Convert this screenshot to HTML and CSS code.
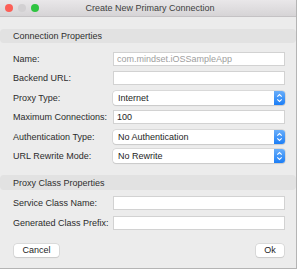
FILE: index.html
```html
<!DOCTYPE html>
<html lang="en">
<head>
  <meta charset="UTF-8" />
  <title>Create New Primary Connection</title>
  <link rel="stylesheet" href="styles.css">
</head>
<body>
  <div class="window">
    <div class="titlebar">
      <div class="lights">
        <span class="light red"></span>
        <span class="light gray"></span>
        <span class="light green"></span>
      </div>
      <div class="title">Create New Primary Connection</div>
    </div>

    <div class="section-head">Connection Properties</div>
    <div class="fields first">
      <label>Name:</label>
      <input type="text" class="field" placeholder="com.mindset.iOSSampleApp">
      <label>Backend URL:</label>
      <input type="text" class="field">
      <label>Proxy Type:</label>
      <div class="select"><span>Internet</span><span class="stepper"><svg width="11" height="14" viewBox="0 0 11 14"><path d="M3.3 5.6 L5.5 3.6 L7.7 5.6 M3.3 8.4 L5.5 10.4 L7.7 8.4" fill="none" stroke="#fff" stroke-width="1.1"/></svg></span></div>
      <label>Maximum Connections:</label>
      <input type="text" class="field" value="100">
      <label>Authentication Type:</label>
      <div class="select"><span>No Authentication</span><span class="stepper"><svg width="11" height="14" viewBox="0 0 11 14"><path d="M3.3 5.6 L5.5 3.6 L7.7 5.6 M3.3 8.4 L5.5 10.4 L7.7 8.4" fill="none" stroke="#fff" stroke-width="1.1"/></svg></span></div>
      <label>URL Rewrite Mode:</label>
      <div class="select"><span>No Rewrite</span><span class="stepper"><svg width="11" height="14" viewBox="0 0 11 14"><path d="M3.3 5.6 L5.5 3.6 L7.7 5.6 M3.3 8.4 L5.5 10.4 L7.7 8.4" fill="none" stroke="#fff" stroke-width="1.1"/></svg></span></div>
    </div>

    <div class="section-head second">Proxy Class Properties</div>
    <div class="fields second-fields">
      <label>Service Class Name:</label>
      <input type="text" class="field">
      <label>Generated Class Prefix:</label>
      <input type="text" class="field">
    </div>

    <div class="buttons">
      <button class="btn cancel">Cancel</button>
      <button class="btn ok">Ok</button>
    </div>
  </div>
</body>
</html>
```

FILE: styles.css
```css
body {
  margin: 0;
  padding: 0;
  background: #ffffff;
  font-family: 'Liberation Sans', Arial, sans-serif;
  font-size: 9px;
  color: #2b2b2b;
}

.window {
  width: 296px;
  height: 268px;
  background: #ececec;
  border-right: 1px solid #b4b4b4;
  border-bottom: 1px solid #b4b4b4;
  display: flex;
  flex-direction: column;
}

/* Title bar */
.titlebar {
  height: 16px;
  border-bottom: 1px solid #c4c2c4;
  background: linear-gradient(#e9e7e9, #d6d4d6);
  display: flex;
  align-items: center;
}

.lights {
  display: flex;
  gap: 5px;
  padding-left: 5px;
}

.light {
  width: 8px;
  height: 8px;
  border-radius: 50%;
}

.light.red { background: #fc5f57; }
.light.gray { background: #d2d0d2; }
.light.green { background: #2fc441; }

.title {
  flex: 1;
  text-align: center;
  color: #404040;
  margin-left: -35px;
  font-size: 9px;
}

/* Section bands */
.section-head {
  margin-top: 12px;
  height: 14px;
  line-height: 15px;
  padding-left: 13px;
  background: #e2e2e2;
  border-radius: 4px;
  color: #2f2f2f;
}

.section-head.second {
  margin-top: 12px;
  height: 15px;
  line-height: 17px;
}

.fields {
  display: grid;
  grid-template-columns: 100px 172px;
  grid-auto-rows: 14px;
  row-gap: 5.4px;
  padding-left: 13px;
  align-items: center;
}

.fields.first {
  margin-top: 9px;
}

.fields.second-fields {
  margin-top: 6px;
  row-gap: 6px;
}

.fields label {
  white-space: nowrap;
}

.field {
  height: 14px;
  box-sizing: border-box;
  border: 1px solid #d2d2d2;
  background: #ffffff;
  font-family: inherit;
  font-size: 9px;
  color: #1e1e1e;
  padding: 0 3px;
  margin: 0;
  outline: none;
}

.field::placeholder {
  color: #9e9e9e;
}

.select {
  height: 14px;
  box-sizing: border-box;
  display: flex;
  align-items: center;
  background: #ffffff;
  border-radius: 3px;
  box-shadow: 0 0 0 0.5px #c6c6c6, 0 1px 1px rgba(0, 0, 0, 0.12);
  padding-left: 5px;
  color: #1e1e1e;
}

.select span:first-child {
  flex: 1;
}

.stepper {
  width: 11px;
  height: 14px;
  border-radius: 0 3px 3px 0;
  background: linear-gradient(#69aefa, #1c7ef6);
  display: flex;
}

/* Buttons */
.buttons {
  margin-top: 14px;
  padding: 0 12px 0 14px;
  display: flex;
  justify-content: space-between;
}

.btn {
  height: 13px;
  padding: 0;
  border: none;
  border-radius: 3px;
  background: #ffffff;
  box-shadow: 0 0 0 0.5px #c8c8c8, 0 1px 1px rgba(0, 0, 0, 0.12);
  font-family: inherit;
  font-size: 9px;
  color: #1e1e1e;
  line-height: 13px;
}

.btn.cancel { width: 45px; }
.btn.ok { width: 28px; }
```
